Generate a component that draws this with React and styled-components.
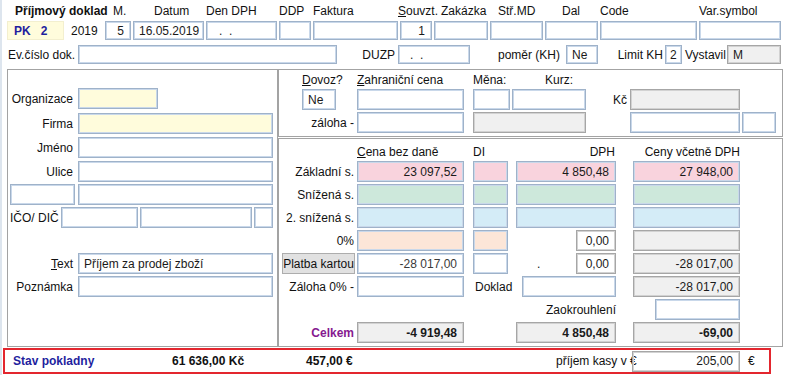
import styled, { createGlobalStyle } from "styled-components";

const fills = {
  white: "#ffffff",
  clear: "transparent",
  yellow: "#fffcdc",
  pink: "#f9d3dd",
  green: "#cde8db",
  blue: "#d4ecf7",
  peach: "#fce6d8",
  gray: "#f0f0f0",
};

const GlobalStyle = createGlobalStyle`
  html, body {
    margin: 0;
    padding: 0;
    background: #ffffff;
  }
  body {
    font-family: "Liberation Sans", Arial, sans-serif;
    font-size: 12px;
    color: #111111;
  }
  * {
    box-sizing: border-box;
  }
`;

const Page = styled.div`
  width: 791px;
  height: 375px;
  overflow: hidden;
  background: linear-gradient(to right, #dde5ee 0 2px, #ffffff 2px);
  display: flex;
  flex-direction: column;
`;

const TopGrid = styled.div`
  display: grid;
  grid-template-columns: 57px 37px 26px 71px 71px 32px 85px 32px 54px 53px 53px 97px 82px;
  grid-template-rows: 21px 19px;
  column-gap: 2px;
  padding-left: 7px;
  align-items: center;
`;

const EvRow = styled.div`
  display: grid;
  grid-template-columns: 70px 259px 61px 72px 96px 32px 67px 17px 45px 54px;
  height: 19px;
  margin-top: 5px;
  padding-left: 8px;
  align-items: center;
`;

const Caption = styled.span`
  grid-column: ${(p) => p.$col || (p.$span ? `span ${p.$span}` : "auto")};
  grid-row: ${(p) => p.$row || "auto"};
  align-self: ${(p) => p.$valign || "center"};
  margin-left: ${(p) => p.$ml || 0}px;
  padding-left: ${(p) => p.$pl || 0}px;
  padding-right: ${(p) => p.$pr || 0}px;
  text-align: ${(p) => p.$align || "left"};
  font-weight: ${(p) => (p.$bold ? 700 : 400)};
  color: ${(p) => p.$color || "#111111"};
  white-space: nowrap;
  line-height: 14px;
`;

const U = styled.span`
  text-decoration: underline;
`;

const Field = styled.div`
  grid-column: ${(p) => p.$col || "auto"};
  grid-row: ${(p) => p.$row || "auto"};
  justify-self: ${(p) => (p.$end ? "end" : "stretch")};
  width: ${(p) => (p.$w ? `${p.$w}px` : "auto")};
  height: ${(p) => p.$h || 21}px;
  margin-left: ${(p) => p.$ml || 0}px;
  background: ${(p) => fills[p.$bg || "white"]};
  border: 1px solid ${(p) => (p.$gray ? "#a6a6a6" : "#9fb2c9")};
  box-shadow: inset 0 0 0 1px ${(p) => (p.$gray ? "#d2d2d2" : "#c9d8ea")};
  padding: 0 6px 0 ${(p) => p.$pl || 5}px;
  display: flex;
  align-items: center;
  justify-content: ${(p) => (p.$right ? "flex-end" : "flex-start")};
  font-weight: ${(p) => (p.$bold ? 700 : 400)};
  color: ${(p) => p.$color || "#1a1a1a"};
  white-space: pre;
  overflow: hidden;
`;

const DocCode = styled.div`
  height: 19px;
  background: ${fills.yellow};
  border: 1px solid #f3efcf;
  padding-left: 6px;
  display: flex;
  align-items: center;
  font-weight: 700;
  color: #1f1f9e;
  white-space: pre;
`;

const Main = styled.div`
  display: flex;
  height: 278px;
  margin-top: 5px;
  padding-left: 7px;
`;

const LeftPanel = styled.div`
  width: 271px;
  border: 1px solid #a3a3a3;
  padding-top: 18px;
  display: flex;
  flex-direction: column;
`;

const LeftRow = styled.div`
  display: grid;
  grid-template-columns: 70px 195px;
  height: 21px;
  margin-top: ${(p) => (p.$mt === undefined ? 2 : p.$mt)}px;
  align-items: center;
`;

const IcoRow = styled.div`
  display: flex;
  height: 21px;
  margin-top: 2px;
  gap: 2px;
  align-items: center;
`;

const IcoLabel = styled.span`
  width: 51px;
  padding-left: 2px;
  white-space: nowrap;
`;

const RightCol = styled.div`
  width: 505px;
  display: flex;
  flex-direction: column;
  gap: 1px;
`;

const ForeignBox = styled.div`
  height: 68px;
  border: 1px solid #a3a3a3;
  display: grid;
  grid-template-columns: 23px 34px 21px 107px 9px 37px 2px 74px 44px 110px 2px 34px;
  grid-template-rows: 17px 21px 21px;
  row-gap: 2px;
  align-items: center;
`;

const VatBox = styled.div`
  flex: 1;
  border: 1px solid #a3a3a3;
  display: grid;
  grid-template-columns: 78px 107px 9px 35px 8px 100px 17px 107px;
  grid-template-rows: 20px repeat(8, 21px);
  row-gap: 2px;
  align-items: center;
`;

const CardButton = styled.button`
  grid-column: 1;
  grid-row: 6;
  justify-self: end;
  width: 73px;
  height: 21px;
  margin-right: 2px;
  padding: 0;
  background: #e1e1e1;
  border: 1px solid #adadad;
  font: inherit;
  color: #111111;
  white-space: nowrap;
  overflow: visible;
`;

const StatusBar = styled.div`
  width: 768px;
  height: 26px;
  margin: 1px 0 0 3px;
  border: 2px solid #e3262e;
  display: grid;
  grid-template-columns: 167px 134px 250px 76px 108px 1fr;
  align-items: center;
`;

const vatRows = [
  { label: "Základní s.", bg: "pink", base: "23 097,52", vat: "4 850,48", total: "27 948,00" },
  { label: "Snížená s.", bg: "green" },
  { label: "2. snížená s.", bg: "blue" },
];

export default function App() {
  return (
    <>
      <GlobalStyle />
      <Page>
        <TopGrid>
          <Caption $span={2} $pl={8} $bold>Příjmový doklad</Caption>
          <Caption $pl={8}>M.</Caption>
          <Caption $pl={21}>Datum</Caption>
          <Caption>Den DPH</Caption>
          <Caption>DDP</Caption>
          <Caption>Faktura</Caption>
          <Caption $ml={-2}><U>S</U>ouvzt.</Caption>
          <Caption $pl={7}>Zakázka</Caption>
          <Caption $pl={8}>Stř.MD</Caption>
          <Caption $pl={17}>Dal</Caption>
          <Caption>Code</Caption>
          <Caption>Var.symbol</Caption>

          <DocCode>PK   2</DocCode>
          <Caption $pl={5}>2019</Caption>
          <Field $h={19} $right>5</Field>
          <Field $h={19}>16.05.2019</Field>
          <Field $h={19} $pl={12}>.  .</Field>
          <Field $h={19} />
          <Field $h={19} />
          <Field $h={19} $right>1</Field>
          <Field $h={19} />
          <Field $h={19} />
          <Field $h={19} />
          <Field $h={19} />
          <Field $h={19} />
        </TopGrid>

        <EvRow>
          <Caption>Ev.číslo dok.</Caption>
          <Field $h={19} />
          <Caption $align="right" $pr={3}>DUZP</Caption>
          <Field $h={19} $pl={11}>.  .</Field>
          <Caption $align="right" $pr={6}>poměr (KH)</Caption>
          <Field $h={19}>Ne</Field>
          <Caption $align="right" $pr={2}>Limit KH</Caption>
          <Field $h={19} $pl={4}>2</Field>
          <Caption $pl={3}>Vystavil</Caption>
          <Field $h={19} $bg="gray" $gray>M</Field>
        </EvRow>

        <Main>
          <LeftPanel>
            <LeftRow $mt={0}>
              <Caption $align="right" $pr={5}>Organizace</Caption>
              <Field $w={80} $bg="yellow" />
            </LeftRow>
            <LeftRow $mt={4}>
              <Caption $align="right" $pr={5}>Firma</Caption>
              <Field $bg="yellow" />
            </LeftRow>
            <LeftRow $mt={3}>
              <Caption $align="right" $pr={5}>Jméno</Caption>
              <Field />
            </LeftRow>
            <LeftRow $mt={3}>
              <Caption $align="right" $pr={5}>Ulice</Caption>
              <Field />
            </LeftRow>
            <LeftRow>
              <Field $w={65} $ml={2} />
              <Field />
            </LeftRow>
            <IcoRow>
              <IcoLabel>IČO/ DIČ</IcoLabel>
              <Field $w={77} />
              <Field $w={112} />
              <Field $w={19} />
            </IcoRow>
            <LeftRow $mt={25}>
              <Caption $align="right" $pr={5}><U>T</U>ext</Caption>
              <Field>Příjem za prodej zboží</Field>
            </LeftRow>
            <LeftRow>
              <Caption $align="right" $pr={5}>Poznámka</Caption>
              <Field />
            </LeftRow>
          </LeftPanel>

          <RightCol>
            <ForeignBox>
              <Caption $col="2" $row="1" $valign="end"><U>D</U>ovoz?</Caption>
              <Caption $col="4" $row="1" $valign="end"><U>Z</U>ahraniční cena</Caption>
              <Caption $col="6 / span 2" $row="1" $valign="end">Měna:</Caption>
              <Caption $col="8" $row="1" $valign="end" $pl={33}>Kurz:</Caption>

              <Field $col="2" $row="2">Ne</Field>
              <Field $col="4" $row="2" />
              <Field $col="6" $row="2" />
              <Field $col="8" $row="2" />
              <Caption $col="9" $row="2" $align="right" $pr={3}>Kč</Caption>
              <Field $col="10" $row="2" $bg="gray" $gray />

              <Caption $col="1 / span 3" $row="3" $align="right" $pr={3}>záloha -</Caption>
              <Field $col="4" $row="3" />
              <Field $col="6 / span 3" $row="3" $bg="gray" $gray />
              <Field $col="10" $row="3" />
              <Field $col="12" $row="3" />
            </ForeignBox>

            <VatBox>
              <Caption $col="2" $row="1" $valign="end"><U>C</U>ena bez daně</Caption>
              <Caption $col="4" $row="1" $valign="end">DI</Caption>
              <Caption $col="6" $row="1" $valign="end" $align="right" $pr={1}>DPH</Caption>
              <Caption $col="8" $row="1" $valign="end" $align="right">Ceny včetně DPH</Caption>

              {vatRows.map((r, i) => (
                <Row key={r.label} row={i + 2} data={r} />
              ))}

              <Caption $col="1" $row="5" $align="right" $pr={3}>0%</Caption>
              <Field $col="2" $row="5" $bg="peach" />
              <Field $col="4" $row="5" $bg="peach" />
              <Field $col="6" $row="5" $end $w={40} $gray $right>0,00</Field>
              <Field $col="8" $row="5" $bg="gray" $gray />

              <CardButton>Platba kartou</CardButton>
              <Field $col="2" $row="6" $right $color="#3a3a3a">-28 017,00</Field>
              <Field $col="4" $row="6" />
              <Caption $col="6" $row="6" $pl={21}>.</Caption>
              <Field $col="6" $row="6" $end $w={40} $gray $right>0,00</Field>
              <Field $col="8" $row="6" $bg="gray" $gray $right>-28 017,00</Field>

              <Caption $col="1" $row="7" $align="right" $pr={3}>Záloha 0% -</Caption>
              <Field $col="2" $row="7" />
              <Caption $col="4 / span 2" $row="7" $pl={2}>Doklad</Caption>
              <Field $col="6" $row="7" $end $w={94} />
              <Field $col="8" $row="7" $bg="gray" $gray $right>-28 017,00</Field>

              <Caption $col="4 / span 3" $row="8" $align="right">Zaokrouhlení</Caption>
              <Field $col="8" $row="8" $end $w={85} />

              <Caption $col="1" $row="9" $align="right" $pr={3} $bold $color="#86198f">Celkem</Caption>
              <Field $col="2" $row="9" $bg="gray" $gray $right $bold>-4 919,48</Field>
              <Field $col="6" $row="9" $bg="gray" $gray $right $bold>4 850,48</Field>
              <Field $col="8" $row="9" $bg="gray" $gray $right $bold>-69,00</Field>
            </VatBox>
          </RightCol>
        </Main>

        <StatusBar>
          <Caption $pl={8} $bold $color="#1f1f9e">Stav pokladny</Caption>
          <Caption $bold>61 636,00 Kč</Caption>
          <Caption $bold>457,00 €</Caption>
          <Caption>příjem kasy v €</Caption>
          <Field $gray $right $bg="clear">205,00</Field>
          <Caption $pl={8}>€</Caption>
        </StatusBar>
      </Page>
    </>
  );
}

function Row({ row, data }) {
  return (
    <>
      <Caption $col="1" $row={String(row)} $align="right" $pr={3}>{data.label}</Caption>
      <Field $col="2" $row={String(row)} $bg={data.bg} $right>{data.base}</Field>
      <Field $col="4" $row={String(row)} $bg={data.bg} />
      <Field $col="6" $row={String(row)} $bg={data.bg} $right>{data.vat}</Field>
      <Field $col="8" $row={String(row)} $bg={data.bg} $right>{data.total}</Field>
    </>
  );
}
